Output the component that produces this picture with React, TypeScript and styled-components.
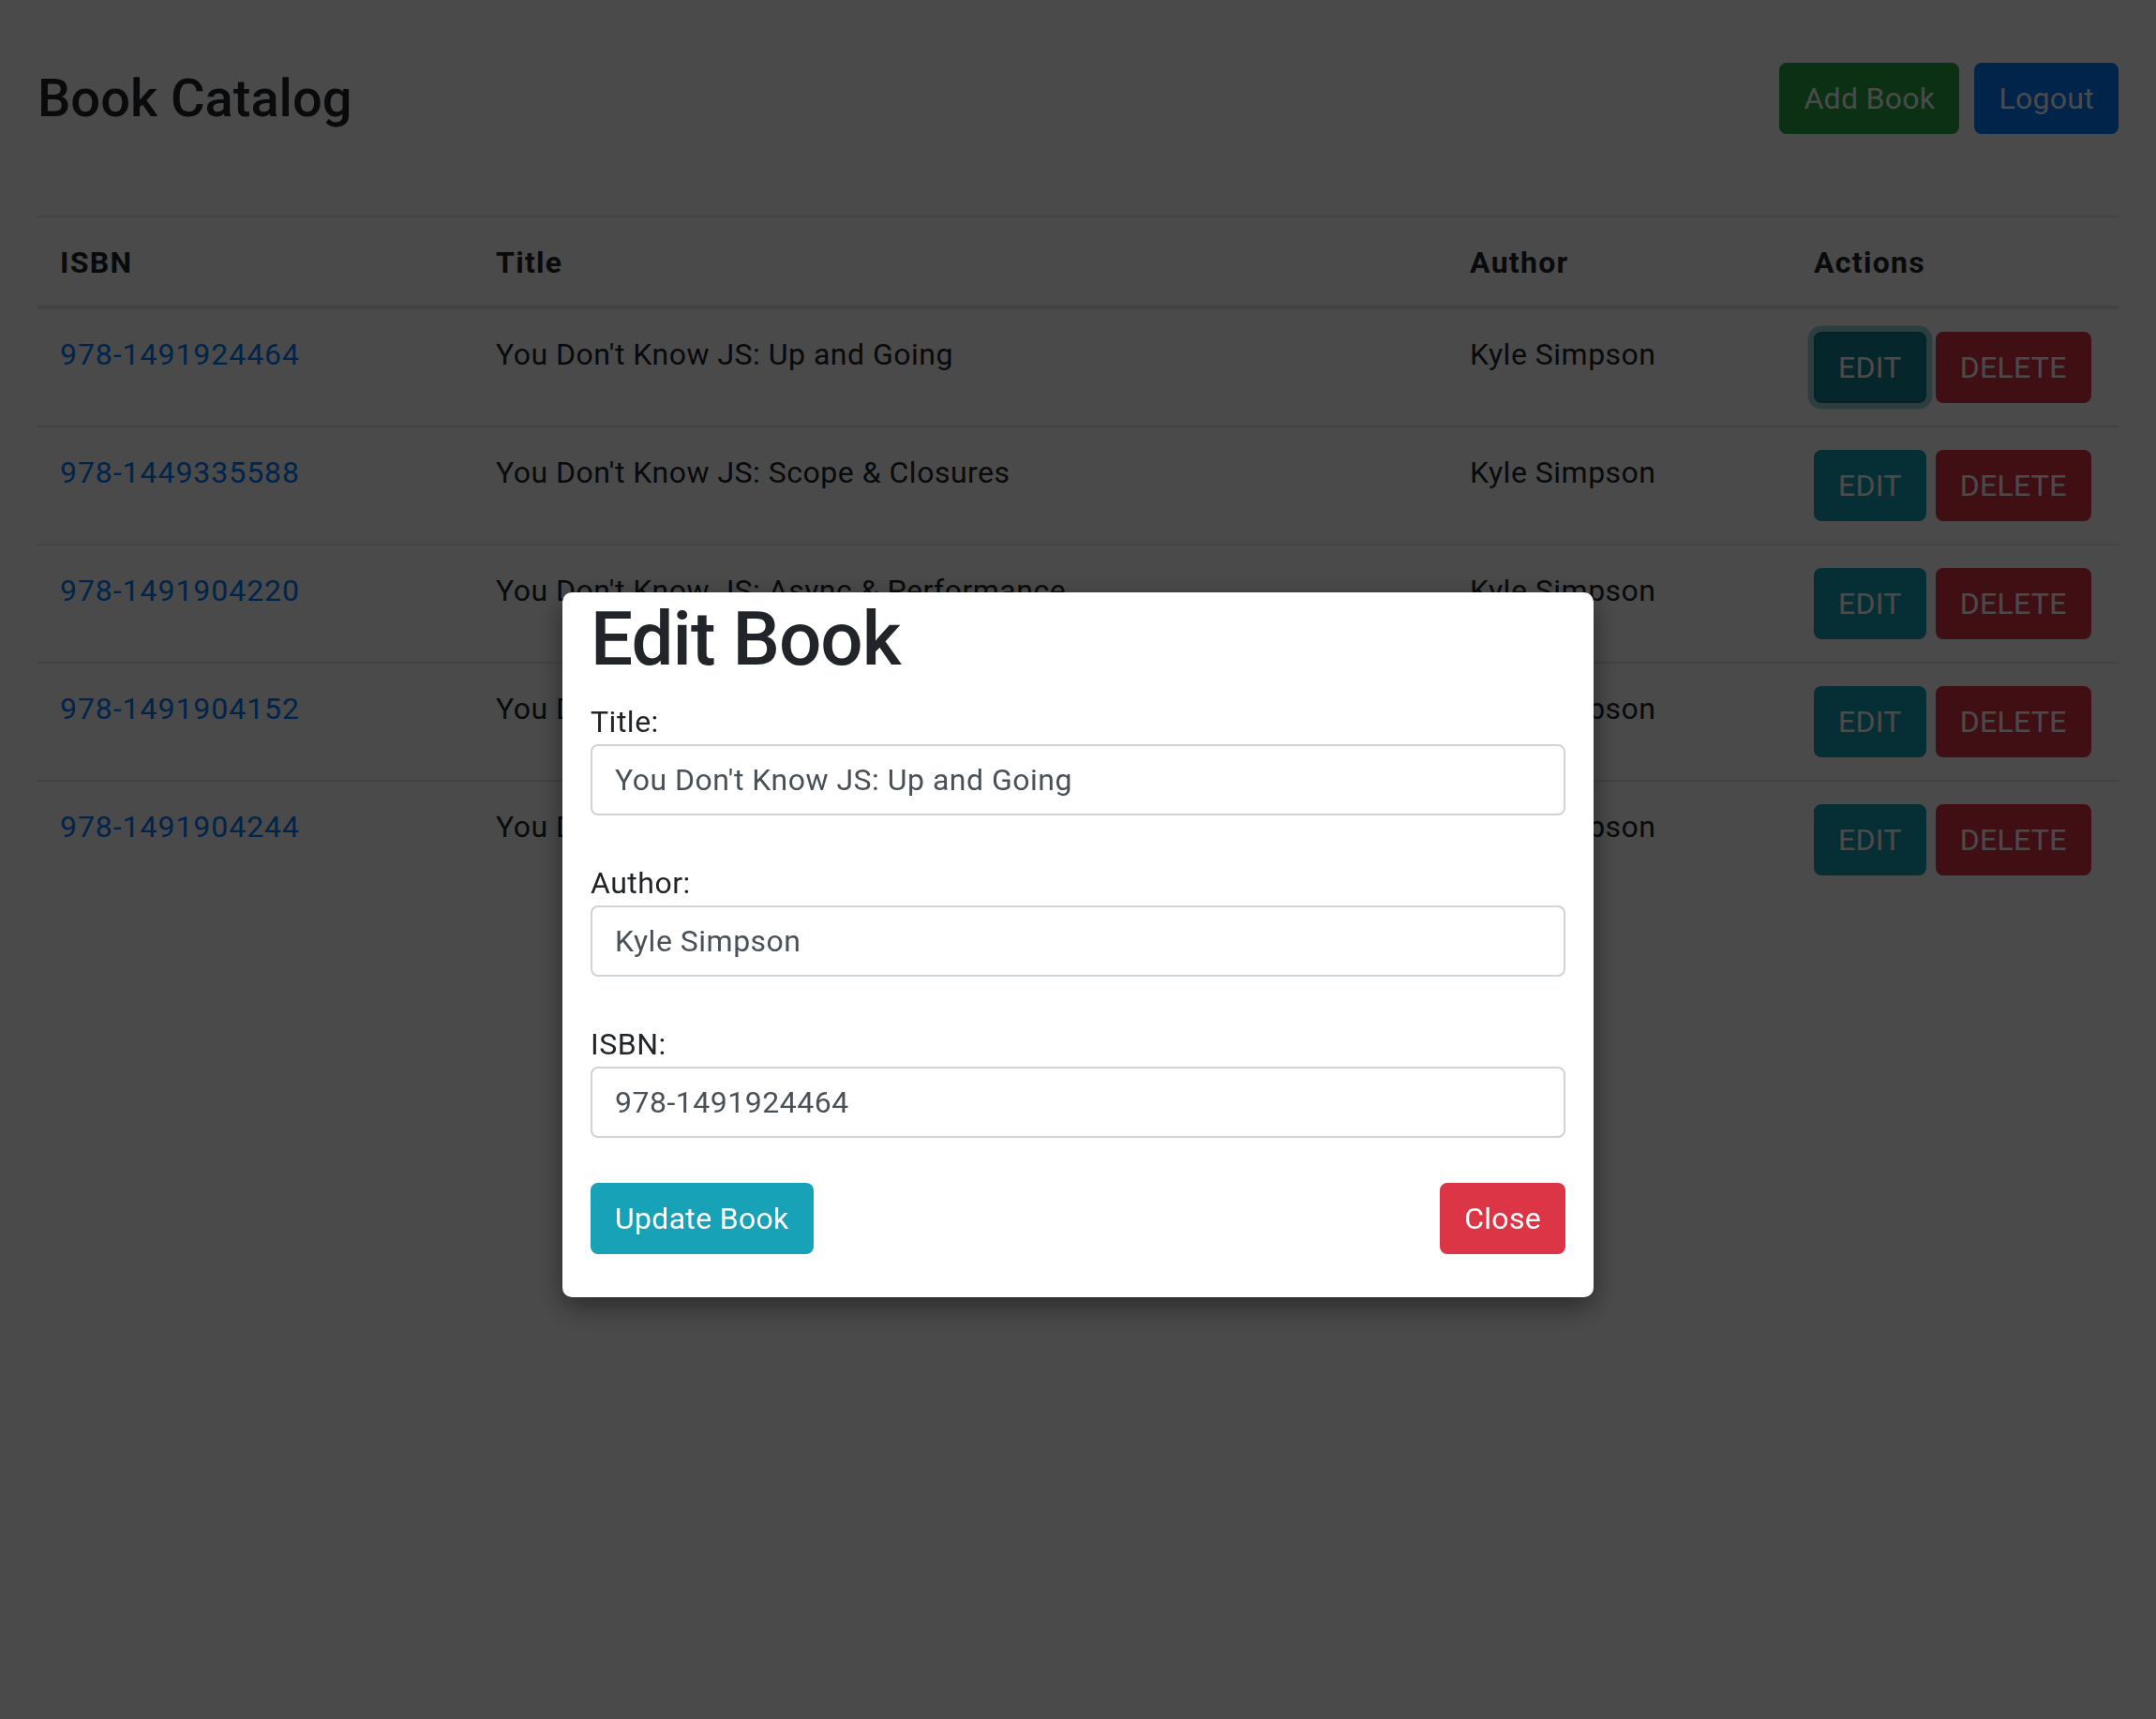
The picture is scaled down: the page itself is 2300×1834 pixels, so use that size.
import React from "react";
import styled, { createGlobalStyle, css } from "styled-components";

const GlobalStyle = createGlobalStyle`
  *, *::before, *::after { box-sizing: border-box; }
  html, body { margin: 0; padding: 0; }
  body {
    background: #ffffff;
    font-family: Roboto, "Noto Sans", "Liberation Sans", sans-serif;
    font-size: 32px;
    line-height: 1.5;
    letter-spacing: 0.5px;
    color: #212529;
  }
`;

const Page = styled.div`
  min-height: 1834px;
`;

const Container = styled.div`
  max-width: 2220px;
  margin: 0 auto;
`;

const Header = styled.header`
  display: flex;
  align-items: center;
  justify-content: space-between;
  padding-top: 67px;
  margin-bottom: 86px;
`;

const PageTitle = styled.h2`
  margin: 0;
  font-size: 56px;
  font-weight: 500;
  line-height: 1.37;
  letter-spacing: 0;
`;

const ButtonRow = styled.div`
  display: flex;
  gap: 16px;
`;

type Variant = "success" | "primary" | "info" | "danger";

const palette: Record<Variant, { bg: string; border: string; focusBg: string; focusBorder: string; ring: string }> = {
  success: { bg: "#28a745", border: "#28a745", focusBg: "#218838", focusBorder: "#1e7e34", ring: "rgba(72,180,97,.5)" },
  primary: { bg: "#007bff", border: "#007bff", focusBg: "#0069d9", focusBorder: "#0062cc", ring: "rgba(38,143,255,.5)" },
  info: { bg: "#17a2b8", border: "#17a2b8", focusBg: "#138496", focusBorder: "#117a8b", ring: "rgba(58,176,195,.5)" },
  danger: { bg: "#dc3545", border: "#dc3545", focusBg: "#c82333", focusBorder: "#bd2130", ring: "rgba(225,83,97,.5)" },
};

const Button = styled.button<{ $variant: Variant; $focused?: boolean; $upper?: boolean }>`
  display: inline-block;
  font-family: inherit;
  font-size: 32px;
  font-weight: 400;
  line-height: 1.5;
  letter-spacing: 0.3px;
  padding: 12px 24px;
  border-radius: 8px;
  border: 2px solid ${(p) => palette[p.$variant].border};
  background: ${(p) => palette[p.$variant].bg};
  color: #ffffff;
  cursor: pointer;
  white-space: nowrap;
  text-transform: ${(p) => (p.$upper ? "uppercase" : "none")};
  ${(p) =>
    p.$focused &&
    css`
      background: ${palette[p.$variant].focusBg};
      border-color: ${palette[p.$variant].focusBorder};
      box-shadow: 0 0 0 6.4px ${palette[p.$variant].ring};
    `}
`;

const Table = styled.table`
  width: 100%;
  border-collapse: collapse;
  table-layout: fixed;
`;

const Th = styled.th<{ $w: number }>`
  width: ${(p) => p.$w}px;
  text-align: left;
  font-weight: 700;
  letter-spacing: 1.3px;
  padding: 24px 24px 22px;
  vertical-align: bottom;
  border-top: 2px solid #dee2e6;
  border-bottom: 4px solid #dee2e6;
`;

const Td = styled.td`
  padding: 24px;
  vertical-align: top;
  border-top: 2px solid #dee2e6;
  height: 124px;
`;

const IsbnLink = styled.a`
  color: #007bff;
  text-decoration: none;
  letter-spacing: 0.95px;
`;

const Actions = styled.div`
  display: flex;
  gap: 10px;
`;

const Overlay = styled.div`
  position: fixed;
  inset: 0;
  background: rgba(0, 0, 0, 0.71);
  display: flex;
  justify-content: center;
  align-items: flex-start;
  padding-top: 632px;
`;

const Modal = styled.div`
  width: 1100px;
  background: #ffffff;
  border-radius: 10px;
  box-shadow: 0 10px 30px rgba(0, 0, 0, 0.45);
  padding: 2px 30px 46px;
`;

const ModalTitle = styled.h1`
  margin: 0 0 16px;
  font-size: 80px;
  font-weight: 500;
  line-height: 1.2;
  letter-spacing: -1px;
  color: #212529;
`;

const Field = styled.div`
  margin-bottom: 48px;
`;

const Label = styled.label`
  display: block;
  font-size: 32px;
  line-height: 1.5;
  color: #212529;
`;

const Input = styled.input`
  display: block;
  width: 100%;
  height: 76px;
  padding: 12px 24px;
  font-family: inherit;
  font-size: 32px;
  line-height: 1.5;
  letter-spacing: 0.5px;
  color: #495057;
  background: #ffffff;
  border: 2px solid #ced4da;
  border-radius: 8px;
  outline: none;
`;

const ModalFooter = styled.div`
  display: flex;
  justify-content: space-between;
`;

const books = [
  { isbn: "978-1491924464", title: "You Don't Know JS: Up and Going", author: "Kyle Simpson" },
  { isbn: "978-1449335588", title: "You Don't Know JS: Scope & Closures", author: "Kyle Simpson" },
  { isbn: "978-1491904220", title: "You Don't Know JS: Async & Performance", author: "Kyle Simpson" },
  { isbn: "978-1491904152", title: "You Don't Know JS: this & Object Prototypes", author: "Kyle Simpson" },
  { isbn: "978-1491904244", title: "You Don't Know JS: ES6 & Beyond", author: "Kyle Simpson" },
];

export default function App() {
  return (
    <Page>
      <GlobalStyle />
      <Container>
        <Header>
          <PageTitle>Book Catalog</PageTitle>
          <ButtonRow>
            <Button $variant="success">Add Book</Button>
            <Button $variant="primary">Logout</Button>
          </ButtonRow>
        </Header>
        <Table>
          <thead>
            <tr>
              <Th $w={465}>ISBN</Th>
              <Th $w={1039}>Title</Th>
              <Th $w={367}>Author</Th>
              <Th $w={349}>Actions</Th>
            </tr>
          </thead>
          <tbody>
            {books.map((b, i) => (
              <tr key={b.isbn}>
                <Td>
                  <IsbnLink href="#">{b.isbn}</IsbnLink>
                </Td>
                <Td>{b.title}</Td>
                <Td>{b.author}</Td>
                <Td>
                  <Actions>
                    <Button $variant="info" $upper $focused={i === 0}>
                      Edit
                    </Button>
                    <Button $variant="danger" $upper>
                      Delete
                    </Button>
                  </Actions>
                </Td>
              </tr>
            ))}
          </tbody>
        </Table>
      </Container>
      <Overlay>
        <Modal>
          <ModalTitle>Edit Book</ModalTitle>
          <Field>
            <Label>Title:</Label>
            <Input defaultValue="You Don't Know JS: Up and Going" />
          </Field>
          <Field>
            <Label>Author:</Label>
            <Input defaultValue="Kyle Simpson" />
          </Field>
          <Field>
            <Label>ISBN:</Label>
            <Input defaultValue="978-1491924464" />
          </Field>
          <ModalFooter>
            <Button $variant="info">Update Book</Button>
            <Button $variant="danger">Close</Button>
          </ModalFooter>
        </Modal>
      </Overlay>
    </Page>
  );
}
